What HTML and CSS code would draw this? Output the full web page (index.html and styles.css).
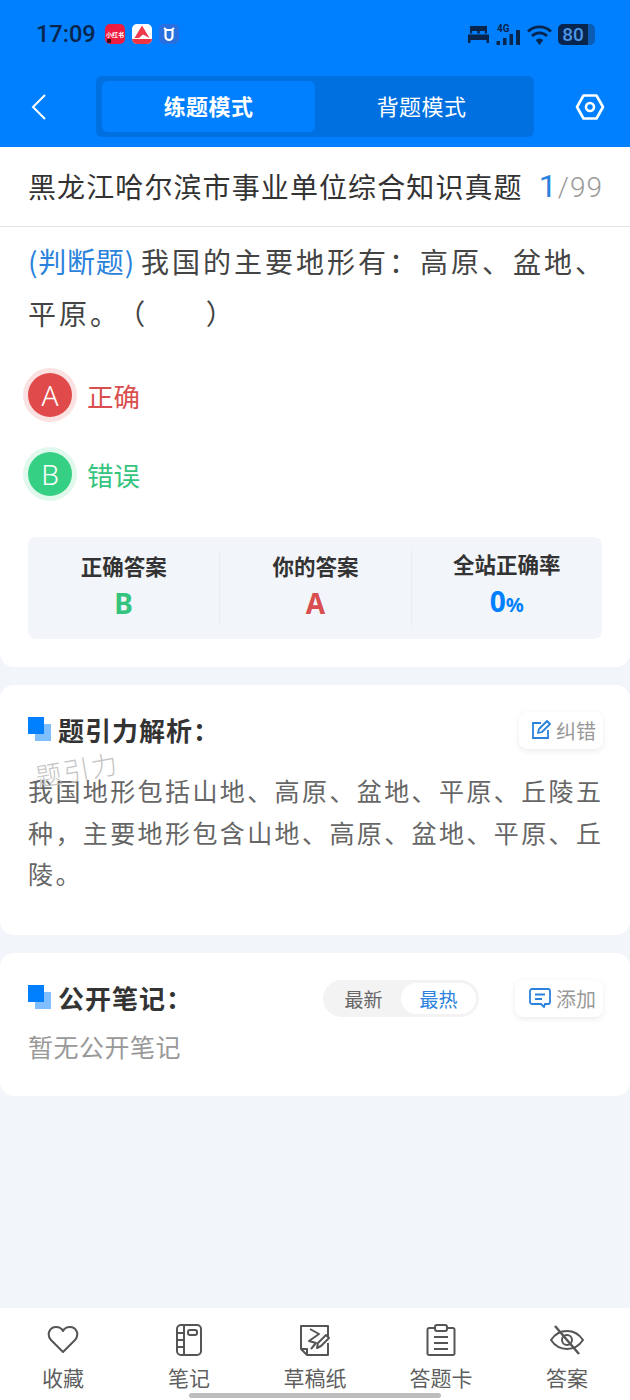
FILE: index.html
```html
<!DOCTYPE html>
<html lang="zh">
<head>
<meta charset="utf-8">
<title>练题模式</title>
<link rel="stylesheet" href="styles.css">
</head>
<body>
<div class="app">
  <header class="top">
    <div class="status">
      <span class="time">17:09</span>
      <div class="apps">
        <span class="app-icon red"><span class="mini">小红书</span><span class="red-dot"></span></span>
        <span class="app-icon white"><svg width="20" height="20" viewBox="0 0 20 20"><path d="M10 1.500 L17.500 14 L11 10.500 L7 14 L2.500 14 Z" fill="#f0394a"/><rect x="0" y="15" width="20" height="5" fill="#ef3340"/></svg></span>
        <span class="app-icon blue"><svg width="20" height="20" viewBox="0 0 20 20"><path d="M5 4l2.500 2h5L15 4M6.500 6v6.500a3.500 3.500 0 0 0 7 0V6" fill="none" stroke="#fff" stroke-width="2.200"/></svg></span>
      </div>
      <div class="sys">
        <svg class="bed" width="21" height="18" viewBox="0 0 21 18"><path d="M0 18V9.500h21V18h-2.500v-3h-16v3zM2 1h17v7.500h-2.200V6h-5v2.500H9.200V6h-5v2.500H2z" fill="#08254d"/></svg>
        <span class="signal"><span class="lte">4G</span><svg width="24" height="15" viewBox="0 0 24 15"><g fill="#08254d"><rect x="0.500" y="11" width="3.500" height="4"/><rect x="7" y="8" width="3.500" height="7"/><rect x="13.500" y="4" width="3.500" height="11"/><rect x="20" y="0" width="4" height="15"/></g></svg></span>
        <svg class="wifi" width="25" height="21" viewBox="0 0 25 21"><g fill="none" stroke="#08254d" stroke-width="2.600"><path d="M1 7.500a16.500 16.500 0 0 1 23 0"/><path d="M5 12a10.500 10.500 0 0 1 15 0"/></g><path d="M8.700 16a5.500 5.500 0 0 1 7.600 0l-3.800 5z" fill="#08254d"/></svg>
        <span class="battery"><span class="level">80</span></span>
      </div>
    </div>
    <div class="nav">
      <svg class="back" width="16" height="26" viewBox="0 0 16 26"><path d="M14 1 L2 13 L14 25" fill="none" stroke="#fff" stroke-width="2"/></svg>
      <div class="modes">
        <span class="mode active">练题模式</span>
        <span class="mode">背题模式</span>
      </div>
      <svg class="gear" width="30" height="26" viewBox="0 0 30 26"><path d="M8.500 1.500h13L28 13l-6.500 11.500h-13L2 13z" fill="none" stroke="#fff" stroke-width="2.600" stroke-linejoin="round"/><circle cx="15" cy="13" r="4" fill="none" stroke="#fff" stroke-width="2.600"/></svg>
    </div>
  </header>

  <main class="content">
    <section class="card question">
      <div class="title-row">
        <h1 class="paper">黑龙江哈尔滨市事业单位综合知识真题</h1>
        <span class="count"><b>1</b>/99</span>
      </div>
      <p class="stem"><span class="tag">(判断题)</span>我国的主要地形有：高原、盆地、平原。 <span class="paren">（　　）</span></p>
      <div class="option">
        <span class="bubble bubble-red">A</span><span class="opt-text red-text">正确</span>
      </div>
      <div class="option">
        <span class="bubble bubble-green">B</span><span class="opt-text green-text">错误</span>
      </div>
      <div class="result">
        <div class="cell"><span class="cell-label">正确答案</span><span class="cell-value green-text">B</span></div>
        <div class="cell"><span class="cell-label">你的答案</span><span class="cell-value red-text">A</span></div>
        <div class="cell"><span class="cell-label">全站正确率</span><span class="cell-value blue-text">0<small>%</small></span></div>
      </div>
    </section>

    <section class="card analysis">
      <div class="head">
        <span class="mark"></span>
        <h2>题引力解析：</h2>
        <span class="pill pill-right">
          <svg width="20" height="20" viewBox="0 0 20 20"><path d="M10 3H2v15h15v-8" fill="none" stroke="#2a82dc" stroke-width="1.800"/><path d="M7 13l1-4 8-8 3 3-8 8z" fill="none" stroke="#2a82dc" stroke-width="1.800" stroke-linejoin="round"/></svg>
          纠错
        </span>
      </div>
      <p class="body-text">我国地形包括山地、高原、盆地、平原、丘陵五种，主要地形包含山地、高原、盆地、平原、丘陵。</p>
      <span class="watermark">题引力</span>
    </section>

    <section class="card notes">
      <div class="head">
        <span class="mark"></span>
        <h2>公开笔记：</h2>
        <div class="sort"><span class="sort-item">最新</span><span class="sort-item on">最热</span></div>
        <span class="pill">
          <svg width="22" height="20" viewBox="0 0 22 20"><path d="M3 1h16a2 2 0 0 1 2 2v11a2 2 0 0 1-2 2h-3l-1 3-3-3H3a2 2 0 0 1-2-2V3a2 2 0 0 1 2-2z" fill="none" stroke="#2a82dc" stroke-width="1.800"/><path d="M6 6.500h10M6 11h7" stroke="#2a82dc" stroke-width="1.800"/></svg>
          添加
        </span>
      </div>
      <p class="empty">暂无公开笔记</p>
    </section>
  </main>

  <nav class="tabs">
    <div class="tab">
      <svg width="32" height="30" viewBox="0 0 32 30"><path d="M16 27 L4 15 C-1 9 3 2 9 2 C12 2 15 4 16 6 C17 4 20 2 23 2 C29 2 33 9 28 15 Z" fill="none" stroke="#555" stroke-width="2" stroke-linejoin="round"/></svg>
      <span>收藏</span>
    </div>
    <div class="tab">
      <svg width="32" height="32" viewBox="0 0 32 32"><g fill="none" stroke="#555" stroke-width="2"><rect x="4" y="1" width="24" height="30" rx="4"/><path d="M11 1v30M4 9h7M4 16h7M4 23h7"/><rect x="15" y="6" width="9" height="5" rx="2"/></g></svg>
      <span>笔记</span>
    </div>
    <div class="tab">
      <svg width="32" height="32" viewBox="0 0 32 32"><g fill="none" stroke="#555" stroke-width="2" stroke-linejoin="round"><path d="M29 13V2H2v23l6 6h21V19"/><path d="M2 25h6v6"/><path d="M11 5l9 5-10 7 7 2-5 6"/><path d="M18 24l1-5 8-8 3 3-8 8z"/></g></svg>
      <span>草稿纸</span>
    </div>
    <div class="tab">
      <svg width="32" height="32" viewBox="0 0 32 32"><g fill="none" stroke="#555" stroke-width="2"><path d="M9 4H4a1.500 1.500 0 0 0-1.500 1.500v24A1.500 1.500 0 0 0 4 31h24a1.500 1.500 0 0 0 1.500-1.500v-24A1.500 1.500 0 0 0 28 4h-5"/><rect x="10" y="1" width="12" height="6" rx="2"/><path d="M9 13h14M9 19h14M9 25h14"/></g></svg>
      <span>答题卡</span>
    </div>
    <div class="tab">
      <svg width="36" height="32" viewBox="0 0 36 32"><g fill="none" stroke="#555" stroke-width="2"><path d="M2 16c8-12 24-12 32 0c-8 12-24 12-32 0z"/><circle cx="18" cy="16" r="5"/><path d="M6 2l24 28" stroke-width="2.400"/></g></svg>
      <span>答案</span>
    </div>
  </nav>
  <div class="home-bar"></div>
</div>
</body>
</html>
```

FILE: styles.css
```css
* { box-sizing: border-box; }
html, body { margin: 0; padding: 0; }
body {
  width: 630px;
  height: 1400px;
  overflow: hidden;
  font-family: "Noto Sans CJK SC", "Noto Sans", sans-serif;
  background: #f2f5f9;
}
h1, h2, p { margin: 0; font-weight: 400; }
.app { position: relative; width: 630px; height: 1400px; display: flex; flex-direction: column; }

.top { background: #0080ff; height: 147px; flex: none; padding: 18px 0 0; }
.status { display: flex; align-items: center; height: 32px; padding: 0 35px 0 36px; }
.time { font-family: Roboto, sans-serif; font-size: 23.5px; font-weight: 500; color: #08254d; width: 69px; }
.apps { display: flex; gap: 7px; }
.app-icon { position: relative; width: 20px; height: 20px; border-radius: 5px; overflow: hidden; display: flex; align-items: center; justify-content: center; }
.red { background: #ee1c3e; }
.red-dot { position: absolute; left: 2px; bottom: 1px; width: 4px; height: 4px; background: #3a1018; border-radius: 1px; }
.mini { color: #fff; font-size: 6px; font-weight: 700; white-space: nowrap; }
.white { background: #fff; }
.blue { background: #2a6fe0; }
.sys { margin-left: auto; display: flex; align-items: center; gap: 6px; }
.bed { margin-right: 1px; }
.signal { position: relative; display: block; width: 24px; height: 21px; }
.signal svg { position: absolute; left: 0; bottom: 0; }
.lte { position: absolute; left: 1px; top: -1px; font: 700 10px Roboto, sans-serif; color: #08254d; }
.wifi { margin-left: 1px; }
.battery { width: 37px; height: 21px; border-radius: 5px; background: linear-gradient(90deg, #08254d 0 81%, #0a5cb4 81% 100%); display: block; }
.level { display: block; text-align: center; padding-right: 7px; font: 500 19px/21px Roboto, sans-serif; color: #4c96e8; }

.nav { display: flex; align-items: center; padding: 0 25px 0 31px; margin-top: 26px; }
.back { flex: none; }
.modes { margin-left: 49px; width: 438px; height: 61px; background: #0070e0; border-radius: 6px; padding: 5px 6px; display: flex; }
.mode { flex: 1; display: flex; align-items: center; justify-content: center; color: #fff; font-size: 22px; letter-spacing: .4px; border-radius: 6px; padding-bottom: 3px; }
.mode.active { background: #0080ff; font-weight: 700; }
.gear { flex: none; margin-left: auto; }

.content { flex: 1; display: flex; flex-direction: column; gap: 18px; }
.card { position: relative; background: #fff; border-radius: 0 0 14px 14px; }
.question { height: 520px; }
.analysis, .notes { border-radius: 14px; }
.analysis { height: 250px; padding: 27px 26px 0 28px; }
.notes { height: 143px; padding: 27px 27px 0 28px; }
.analysis .pill { margin-right: 1px; }

.title-row { display: flex; align-items: center; justify-content: space-between; height: 80px; padding: 0 27px 2px 28px; border-bottom: 1px solid #e2e2e2; }
.paper { font-size: 28px; color: #333; white-space: nowrap; letter-spacing: 1.1px; }
.count { font-size: 28px; color: #999; font-family: Roboto, sans-serif; font-weight: 300; letter-spacing: 1px; }
.count b { font-weight: 400; font-size: 32px; color: #2a82dc; }
.stem { padding: 8px 20px 0 28px; font-size: 28px; line-height: 52px; color: #444; letter-spacing: 3px; }
.tag { display: inline-block; color: #2a82dc; letter-spacing: .8px; margin-right: 6px; }
.paren { margin-left: -13px; letter-spacing: 1.5px; }
.option { display: flex; align-items: center; gap: 10px; margin: 0 0 29px 28px; height: 50px; }
.stem + .option { margin-top: 31px; }
.bubble { width: 44px; height: 44px; border-radius: 50%; display: flex; align-items: center; justify-content: center; font-size: 28px; font-weight: 300; color: #fff; font-family: "Noto Sans", sans-serif; }
.bubble-red { background: #e04a4a; box-shadow: 0 0 0 5px #fbe2e2; }
.bubble-green { background: #35d083; box-shadow: 0 0 0 5px #e1f8ec; }
.opt-text { font-size: 26.5px; margin-left: 5px; }
.red-text { color: #d94e4e; }
.green-text { color: #35c47e; }
.blue-text { color: #0080ff; }
.result { margin: 38px 28px 0; height: 102px; background: #f2f5f9; border-radius: 8px; display: grid; grid-template-columns: repeat(3, 1fr); align-items: center; }
.cell { display: flex; flex-direction: column; align-items: center; border-left: 1px solid #ebeef2; }
.cell:first-child { border-left: none; }
.cell-label { font-size: 21.5px; font-weight: 700; color: #333; line-height: 30px; }
.cell-value { font-size: 28px; font-weight: 700; line-height: 44px; font-family: "Noto Sans", sans-serif; }
.cell-value small { font-size: 20px; }

.head { display: flex; align-items: center; height: 36px; }
.mark { position: relative; width: 23px; height: 24px; flex: none; margin: 0 7px 2px 0; }
.mark::before, .mark::after { content: ""; position: absolute; width: 16px; height: 17px; }
.mark::before { right: 0; bottom: 0; background: #80bfff; }
.mark::after { left: 0; top: 0; background: #0080ff; }
h2 { font-size: 26px; font-weight: 700; color: #333; letter-spacing: 1px; padding-bottom: 2px; }
.pill { margin-left: auto; display: flex; align-items: center; gap: 5px; height: 37px; padding: 0 7px 0 11px; background: #fff; border-radius: 8px; box-shadow: 0 2px 6px rgba(0,0,0,.08); font-size: 20px; color: #999; }
.analysis .pill { padding-left: 12px; }
.notes .pill { padding-left: 14px; }
.sort { margin-left: auto; width: 156px; height: 37px; border-radius: 19px; background: #f3f3f3; padding: 3px; display: flex; }
.sort + .pill { margin-left: 36px; }
.sort-item { flex: 1; display: flex; align-items: center; justify-content: center; font-size: 19px; color: #666; border-radius: 16px; }
.sort-item.on { background: #fff; color: #2a82dc; }
.body-text { margin-top: 22px; font-size: 25px; line-height: 41.5px; color: #666; letter-spacing: 2.4px; }
.watermark { position: absolute; left: 35px; top: 65px; font-size: 26px; font-weight: 300; color: #c4c4c4; transform: rotate(-10deg); letter-spacing: 2px; }
.empty { margin-top: 12px; font-size: 25px; color: #999; letter-spacing: .5px; }

.tabs { flex: none; height: 92px; background: #fff; display: grid; grid-template-columns: repeat(5, 1fr); }
.tab { display: flex; flex-direction: column; align-items: center; gap: 6px; padding-top: 16px; font-size: 21px; color: #5f5f5f; line-height: 30px; }
.tab svg { height: 32px; }
.home-bar { position: absolute; left: 189px; bottom: 2px; width: 252px; height: 5px; border-radius: 3px; background: #bdbdbd; }
```
